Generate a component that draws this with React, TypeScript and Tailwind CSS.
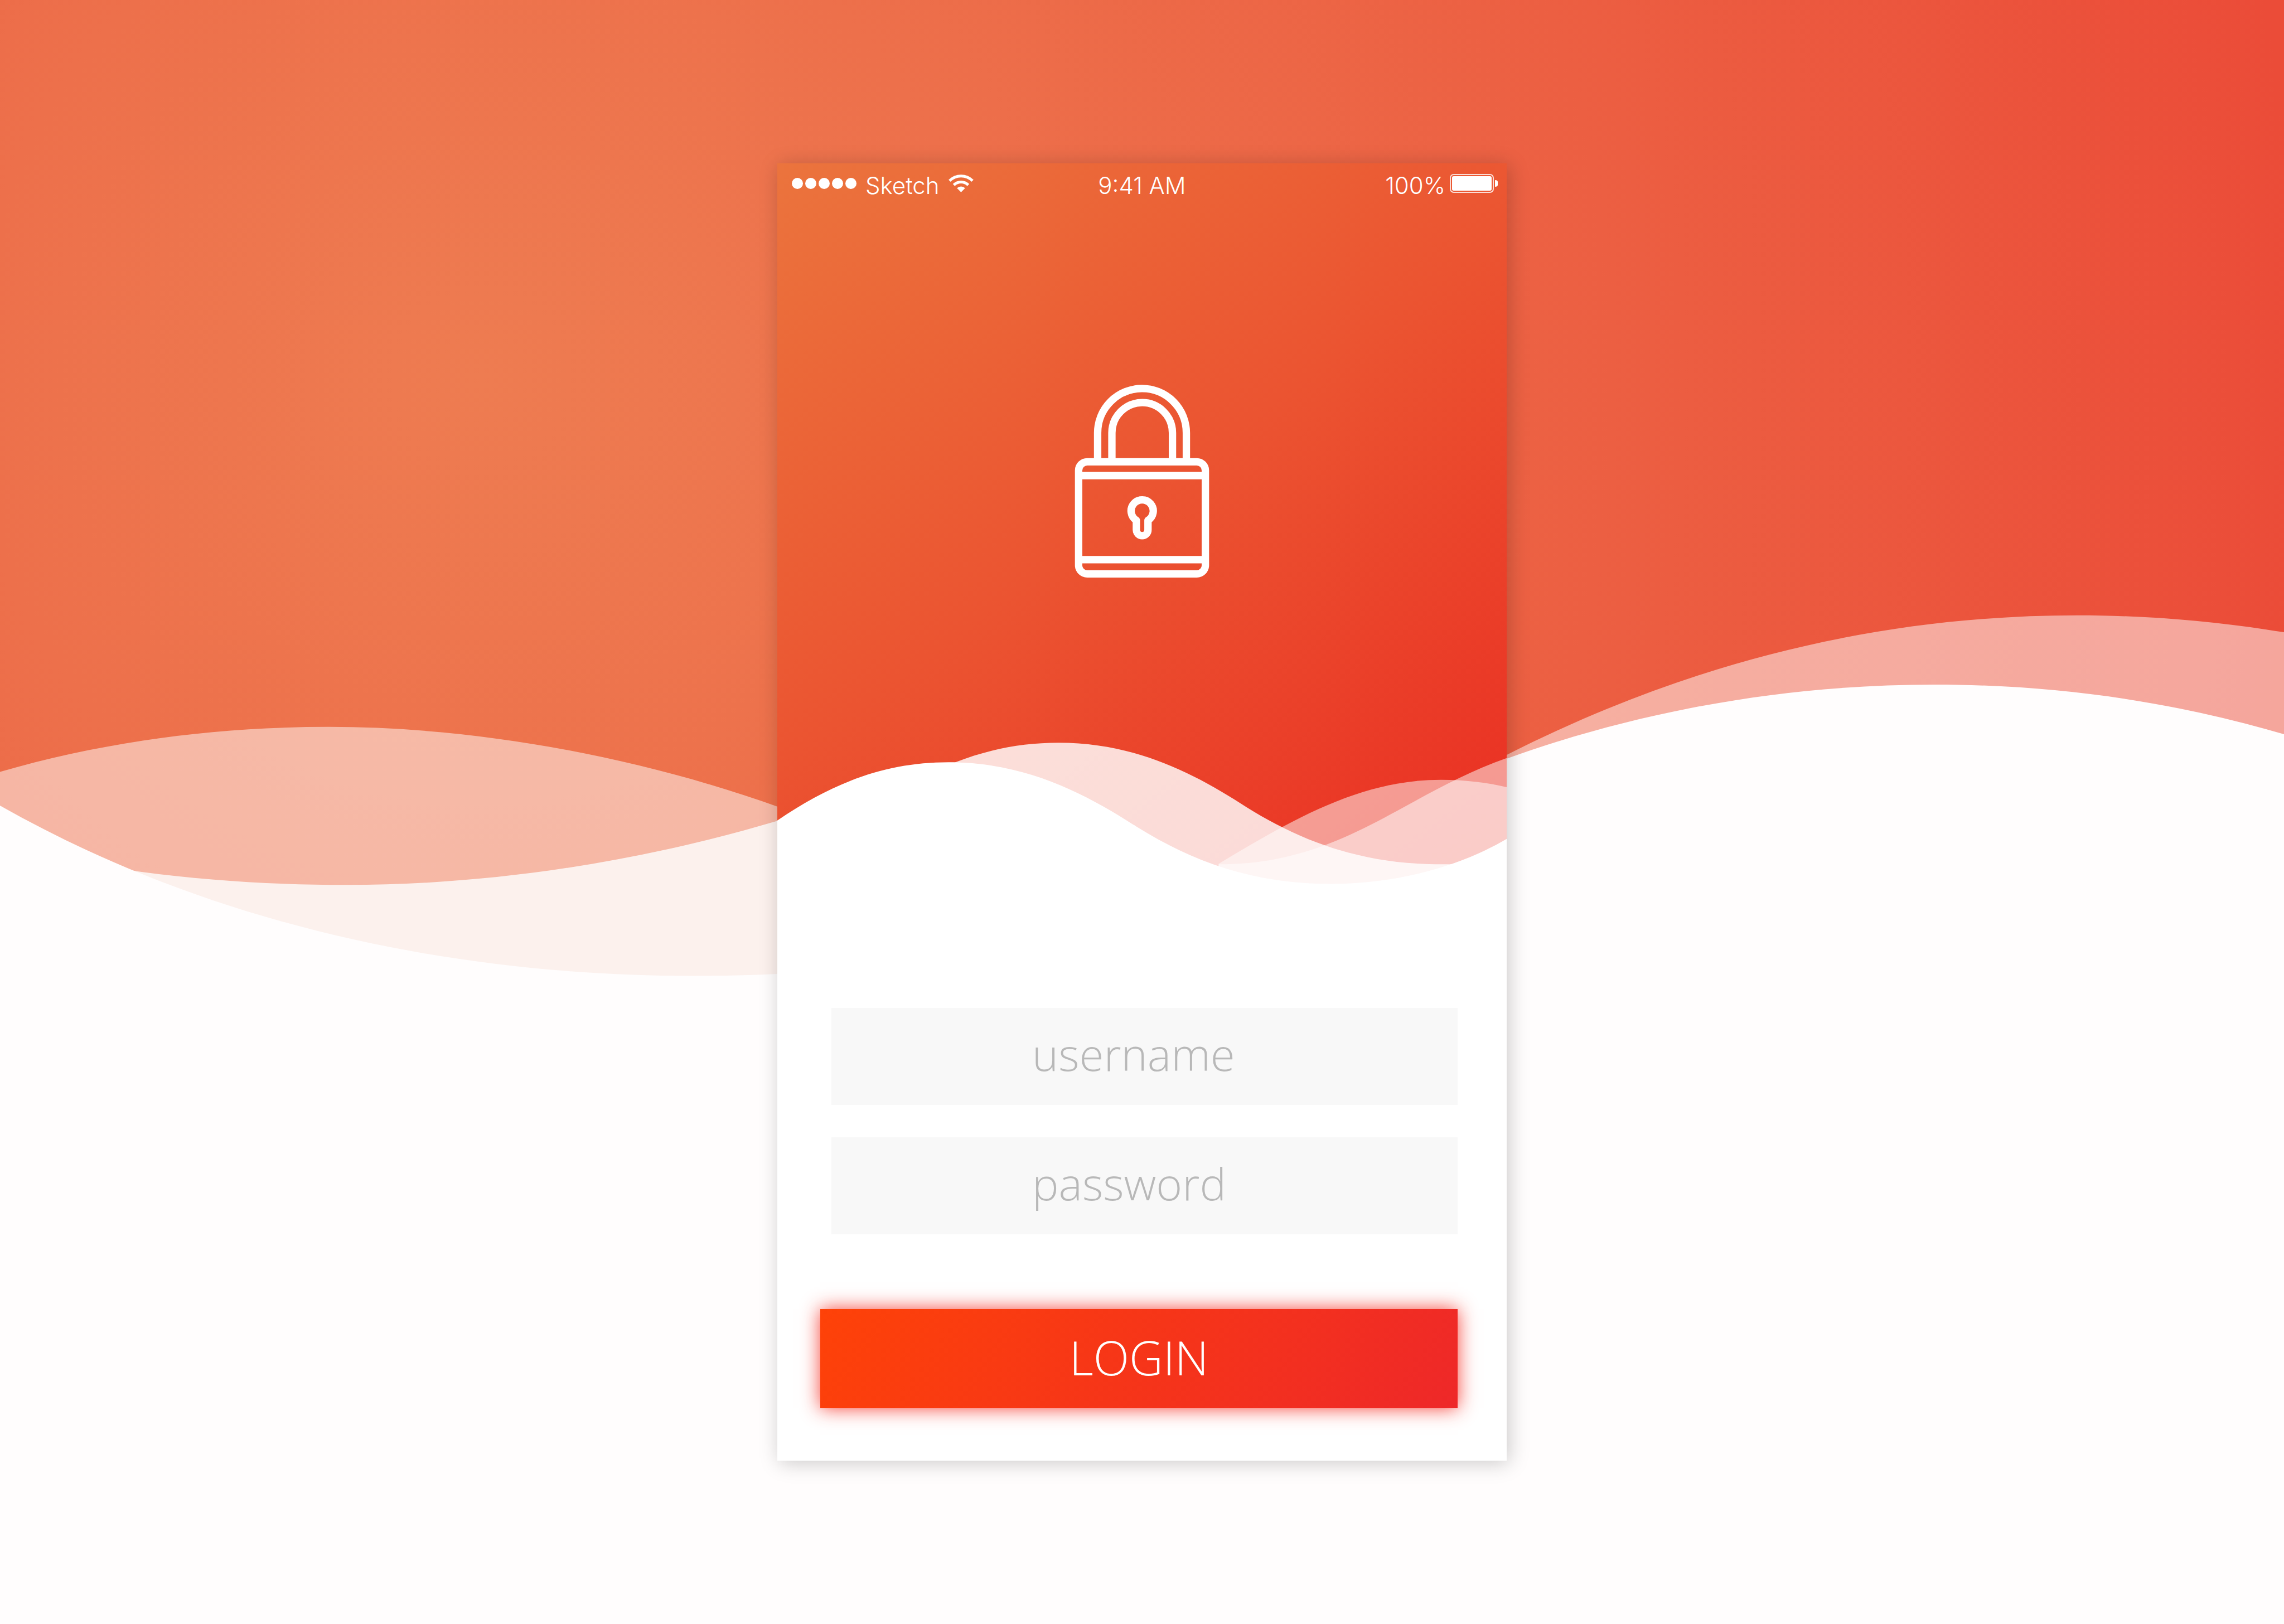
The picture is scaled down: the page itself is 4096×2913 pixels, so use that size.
import React from "react";

function Backdrop() {
  return (
    <svg
      className="absolute inset-0 h-full w-full"
      viewBox="0 0 4320 3072"
      preserveAspectRatio="none"
      aria-hidden="true"
    >
      <defs>
        <radialGradient id="glow" gradientUnits="userSpaceOnUse" cx="909" cy="716" r="3450">
          <stop offset="0" stopColor="#ee7c51" />
          <stop offset="0.28" stopColor="#ed704b" />
          <stop offset="1" stopColor="#eb4c38" />
        </radialGradient>
      </defs>
      <rect width="4320" height="3072" fill="url(#glow)" />
      <path
        d="M0 1460C200 1402 410 1375 622 1375C915 1375 1220 1436 1474 1527L2850 1428C3190 1255 3550 1164 3929 1164C4062 1164 4190 1175 4320 1196V3072H0Z"
        fill="#fffdfd"
        fillOpacity="0.51"
      />
      <path
        d="M200 1640L251 1647C380 1665 515 1674 655 1674C940 1674 1220 1627 1470 1553H1700V1900H200Z"
        fill="#fdf8f6"
        fillOpacity="0.89"
      />
      <path
        d="M0 1524C390 1745 850 1846 1311 1846C1365 1846 1420 1845 1474 1842H2160L2850 1435C3100 1345 3375 1295 3658 1295C3890 1295 4110 1327 4320 1389V3072H0Z"
        fill="#fffdfd"
      />
    </svg>
  );
}

function Waves() {
  return (
    <svg
      className="absolute inset-0 h-full w-full"
      viewBox="1470 309 1380 1391"
      preserveAspectRatio="none"
      aria-hidden="true"
    >
      <defs>
        <linearGradient
          id="sunset"
          gradientUnits="userSpaceOnUse"
          x1="1560"
          y1="240"
          x2="2650"
          y2="1720"
        >
          <stop offset="0" stopColor="#eb743d" />
          <stop offset="0.5" stopColor="#eb5431" />
          <stop offset="1" stopColor="#ea3023" />
        </linearGradient>
      </defs>
      <rect x="1470" y="309" width="1380" height="1391" fill="url(#sunset)" />
      <g fill="#ffffff">
        <path d="M2305 1635C2540 1635 2650 1505 2850 1434V1700H2305Z" fillOpacity="0.5" />
        <path
          d="M2305 1634C2450 1547 2575 1475 2726 1475C2770 1475 2812 1480 2850 1489V1700H2305Z"
          fillOpacity="0.5"
        />
        <path
          d="M1740 1480L1807 1442C1870 1417 1935 1405 2002 1405C2150 1405 2262 1465 2358 1527C2475 1600 2590 1635 2726 1635C2770 1635 2812 1630 2850 1620V1700H1740Z"
          fillOpacity="0.82"
        />
        <path d="M1470 1552C1580 1477 1680 1442 1794 1442C1942 1442 2054 1502 2150 1564C2267 1637 2382 1672 2518 1672C2640 1672 2760 1640 2850 1587V1701H1470Z" />
      </g>
    </svg>
  );
}

function LockIcon() {
  return (
    <svg
      className="h-[346px] w-[242px]"
      viewBox="98 83 762 1096"
      fill="none"
      stroke="#ffffff"
      strokeWidth="42"
      role="img"
      aria-label="Locked"
    >
      <path d="M227 521V357A252 252 0 0 1 731 357V521" />
      <path d="M308 521V357A172 172 0 0 1 652 357V521" />
      <rect x="119" y="521" width="720" height="637" rx="49" />
      <path d="M119 600H839M119 1077H839" />
      <path d="M447 854A63 63 0 1 1 513 854V908A33 33 0 0 1 447 908Z" strokeLinejoin="round" />
    </svg>
  );
}

function WifiIcon() {
  return (
    <svg className="mb-2 h-8 w-[45px]" viewBox="1007 117 142 100" fill="none" aria-hidden="true">
      <path
        d="M1013 152A92 92 0 0 1 1143 152M1037 176A58 58 0 0 1 1119 176"
        stroke="#ffffff"
        strokeWidth="16"
      />
      <path d="M1078 217L1055 194A33 33 0 0 1 1101 194Z" fill="#ffffff" />
    </svg>
  );
}

function BatteryIcon() {
  return (
    <svg className="mb-2 h-[34px] w-[86px]" viewBox="0 0 86 34" fill="none" aria-hidden="true">
      <rect x="1" y="1" width="77" height="32" rx="6" stroke="#ffffff" strokeOpacity="0.8" strokeWidth="2" />
      <rect x="4" y="4" width="71" height="26" rx="3" fill="#ffffff" />
      <path d="M81 11C84 11 86 12 86 14V20C86 22 84 23 81 23Z" fill="#ffffff" />
    </svg>
  );
}

function StatusBar() {
  return (
    <div className="grid grid-cols-[1fr_auto_1fr] items-center px-4 pt-4 font-['Inter',sans-serif] text-[42px] leading-[48px] font-[350] text-white">
      <div className="flex items-center gap-4 pl-2.5">
        <div className="mb-2 flex gap-1">
          {[0, 1, 2, 3, 4].map((dot) => (
            <span key={dot} className="size-5 rounded-full bg-white" />
          ))}
        </div>
        <span>Sketch</span>
        <WifiIcon />
      </div>
      <span>9:41 AM</span>
      <div className="flex items-center justify-end gap-2">
        <span>100%</span>
        <BatteryIcon />
      </div>
    </div>
  );
}

const fieldClass =
  "h-[174px] w-full bg-[#f8f8f8] pb-3 pl-[360px] text-[80px] font-light text-[#8a8a8a] outline-none placeholder:text-[#b8b8b8] placeholder:opacity-100";

export default function App() {
  return (
    <div className="relative min-h-screen w-full overflow-hidden bg-[#fffdfd] font-['Open_Sans',sans-serif]">
      <Backdrop />
      <main className="relative flex justify-center pt-[293px] pb-[293px]">
        <section className="w-full max-w-[1308px] bg-white shadow-[4px_4px_34px_rgba(0,0,0,0.21)]">
          <header className="relative">
            <Waves />
            <div className="relative flex flex-col pb-[576px]">
              <StatusBar />
              <div className="mt-[333px] flex justify-center">
                <LockIcon />
              </div>
            </div>
          </header>
          <form
            className="flex flex-col gap-[134px] pt-[196px] pr-[88px] pb-[94px] pl-[77px]"
            onSubmit={(event) => event.preventDefault()}
          >
            <div className="flex flex-col gap-[58px] pl-5">
              <input type="text" name="username" aria-label="username" placeholder="username" className={fieldClass} />
              <input type="password" name="password" aria-label="password" placeholder="password" className={fieldClass} />
            </div>
            <button
              type="submit"
              className="h-[178px] w-full bg-linear-[125deg] from-[#fe4208] to-[#ee2829] pb-1 text-[84px] font-light text-white shadow-[0_0_32px_rgba(246,48,38,0.9)]"
            >
              LOGIN
            </button>
          </form>
        </section>
      </main>
    </div>
  );
}
